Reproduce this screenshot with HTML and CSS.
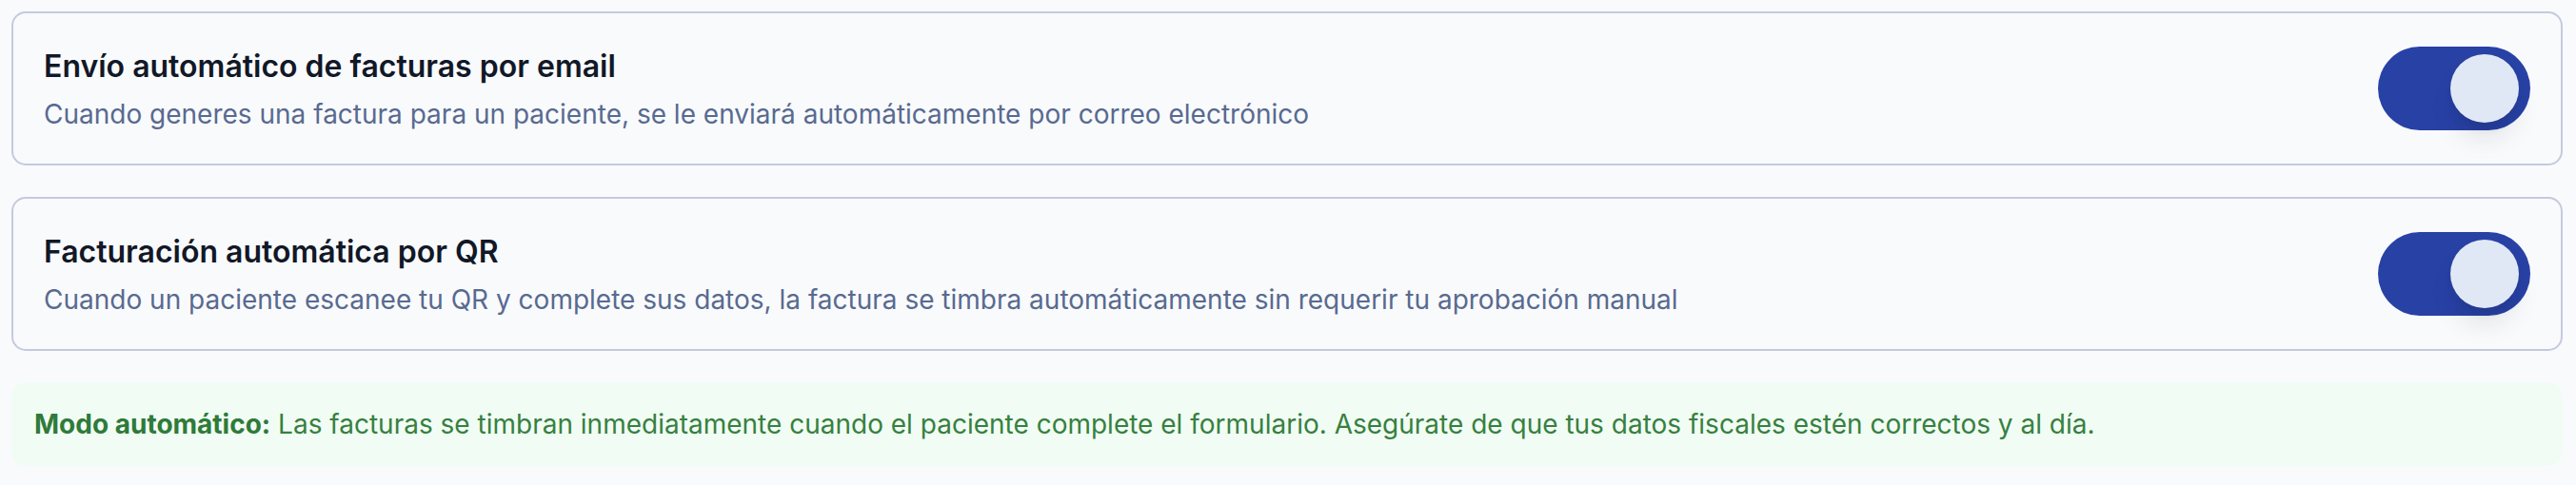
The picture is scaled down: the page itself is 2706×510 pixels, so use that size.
FILE: index.html
```html
<!DOCTYPE html>
<html lang="es">
<head>
<meta charset="utf-8">
<title>Facturación automática</title>
<link rel="stylesheet" href="styles.css">
</head>
<body>
<div class="page">
  <div class="card">
    <div class="card-text">
      <h3 class="card-title">Envío automático de facturas por email</h3>
      <p class="card-desc">Cuando generes una factura para un paciente, se le enviará automáticamente por correo electrónico</p>
    </div>
    <button class="toggle on" type="button" aria-pressed="true"><span class="knob"></span></button>
  </div>
  <div class="card">
    <div class="card-text">
      <h3 class="card-title">Facturación automática por QR</h3>
      <p class="card-desc">Cuando un paciente escanee tu QR y complete sus datos, la factura se timbra automáticamente sin requerir tu aprobación manual</p>
    </div>
    <button class="toggle on" type="button" aria-pressed="true"><span class="knob"></span></button>
  </div>
  <div class="notice">
    <p><strong>Modo automático:</strong> Las facturas se timbran inmediatamente cuando el paciente complete el formulario. Asegúrate de que tus datos fiscales estén correctos y al día.</p>
  </div>
</div>
</body>
</html>
```
FILE: styles.css
```css
* { box-sizing: border-box; }
html, body {
  margin: 0;
  padding: 0;
  background: #f8fafc;
}
body {
  font-family: "Inter", "Noto Sans", sans-serif;
  width: 2706px;
  height: 510px;
  overflow: hidden;
}
.page {
  display: flex;
  flex-direction: column;
  gap: 33px;
  padding: 12px 14px 0 12px;
}
.card {
  display: flex;
  align-items: center;
  justify-content: space-between;
  height: 162px;
  padding: 0 32px;
  background: #f9fafc;
  border: 2px solid #c4cadd;
  border-radius: 15px;
}
.card-text {
  display: flex;
  flex-direction: column;
  gap: 6px;
}
.card-title {
  margin: 0;
  font-size: 32px;
  line-height: 48px;
  font-weight: 600;
  color: #111827;
}
.card-desc {
  margin: 0;
  font-size: 28px;
  line-height: 40px;
  font-weight: 400;
  color: #586a90;
}
.toggle {
  display: flex;
  align-items: center;
  justify-content: flex-end;
  width: 160px;
  height: 88px;
  padding: 0 12px;
  border: 0;
  border-radius: 44px;
  background: #2841a5;
  cursor: pointer;
  flex-shrink: 0;
}
.knob {
  display: block;
  width: 72px;
  height: 72px;
  border-radius: 50%;
  background: #e1e8f5;
  box-shadow: 0 20px 30px -6px rgba(15, 23, 42, 0.12), 0 8px 12px -4px rgba(15, 23, 42, 0.12);
}
.notice {
  height: 88px;
  display: flex;
  align-items: center;
  padding: 0 24px;
  background: #f1fdf4;
  border-radius: 15px;
}
.notice p {
  margin: 0;
  font-size: 28px;
  line-height: 40px;
  color: #37803f;
}
.notice strong {
  font-weight: 700;
  color: #2f7a3a;
}
```
